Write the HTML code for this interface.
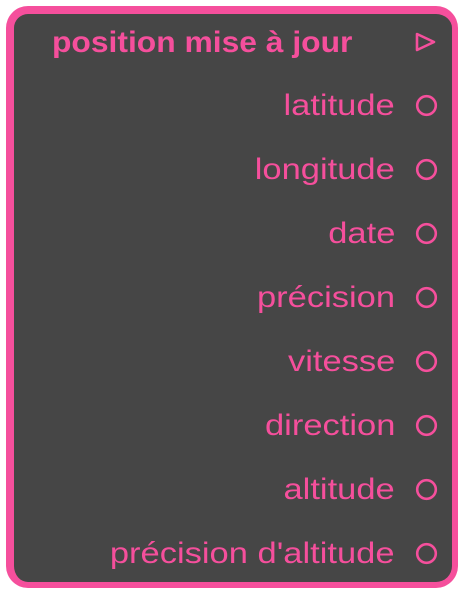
<!DOCTYPE html>
<html><head><meta charset="utf-8"><style>
html,body{margin:0;padding:0;background:#fff;width:463px;height:591px;overflow:hidden}
.box{position:absolute;left:6px;top:6px;width:438px;height:568px;background:#464646;border:solid #f54f9c;border-width:8px 6px 6px 8px;border-radius:22px}
.t{position:absolute;right:68px;font-family:"Liberation Sans",sans-serif;color:#f54f9c;font-size:30px;line-height:32px;white-space:nowrap;transform:scaleX(1.15);transform-origin:right center}
.b{font-weight:bold;right:111px;transform:scaleX(1.06)}
svg{position:absolute;left:0;top:0}
</style></head><body>
<div class="box"></div>
<div class="t b" style="top:27px">position mise à jour</div>
<div class="t" style="top:90px">latitude</div>
<div class="t" style="top:154px">longitude</div>
<div class="t" style="top:218px">date</div>
<div class="t" style="top:282px">précision</div>
<div class="t" style="top:346px">vitesse</div>
<div class="t" style="top:410px">direction</div>
<div class="t" style="top:474px">altitude</div>
<div class="t" style="top:538px">précision d'altitude</div>
<svg width="463" height="591" fill="none" stroke="#f54f9c" stroke-width="2.6">
<path d="M417 34 L434 42 L417 50 Z" stroke-linejoin="round"/>
<circle cx="426.5" cy="105.5" r="9.3"/>
<circle cx="426.5" cy="169.5" r="9.3"/>
<circle cx="426.5" cy="233.5" r="9.3"/>
<circle cx="426.5" cy="297.5" r="9.3"/>
<circle cx="426.5" cy="361.5" r="9.3"/>
<circle cx="426.5" cy="425.5" r="9.3"/>
<circle cx="426.5" cy="489.5" r="9.3"/>
<circle cx="426.5" cy="553.5" r="9.3"/>
</svg>
</body></html>
